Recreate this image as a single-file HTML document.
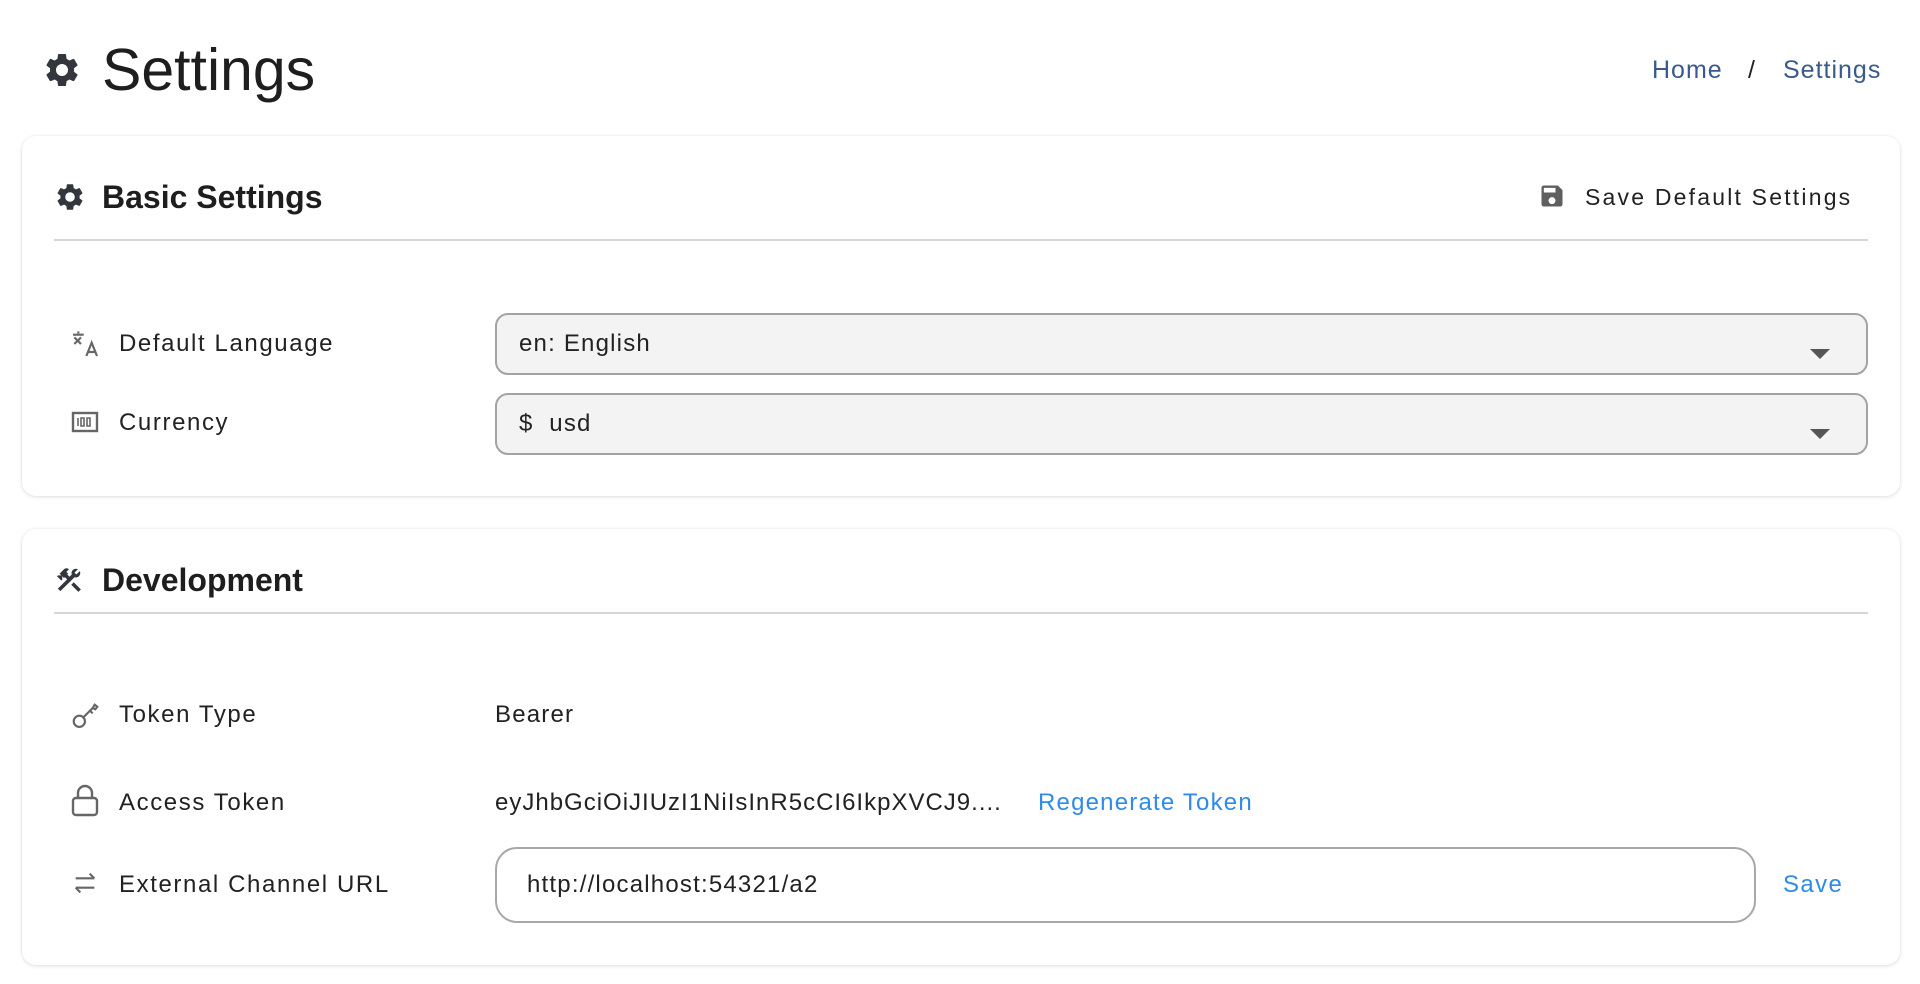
<!DOCTYPE html>
<html><head><meta charset="utf-8"><style>
*{box-sizing:border-box;margin:0;padding:0}
body{width:1920px;height:984px;background:#fff;font-family:"Liberation Sans",sans-serif;color:#222;position:relative;overflow:hidden}
.a{position:absolute}
.card{position:absolute;left:22px;width:1878px;background:#fff;border-radius:14px;box-shadow:0 1px 4px rgba(0,0,0,.12),0 0 2px rgba(0,0,0,.06)}
.h{position:absolute;font-size:32px;font-weight:bold;color:#1e1e1e;line-height:40px}
.div{position:absolute;left:32px;width:1814px;height:2px;background:#d6d6d6}
.lbl{position:absolute;font-size:24px;letter-spacing:1.6px;color:#222;line-height:30px}
.ic{position:absolute}
.sel{position:absolute;left:473px;width:1373px;height:62px;background:#f3f3f3;border:2px solid #a3a3a3;border-radius:13px}
.sel span{position:absolute;left:22px;top:14px;font-size:24px;letter-spacing:1.2px;line-height:30px}
.sel i{position:absolute;right:36px;top:34px;width:0;height:0;border-left:10px solid transparent;border-right:10px solid transparent;border-top:10px solid #555}
</style></head><body>
<svg class="a" style="left:42px;top:50px" width="40" height="40" viewBox="0 0 24 24"><path fill="#33373d" d="M19.14 12.94c.04-.3.06-.61.06-.94 0-.32-.02-.64-.07-.94l2.03-1.58a.49.49 0 0 0 .12-.61l-1.92-3.32a.49.49 0 0 0-.59-.22l-2.39.96c-.5-.38-1.03-.7-1.62-.94l-.36-2.54a.48.48 0 0 0-.48-.41h-3.84a.48.48 0 0 0-.47.41l-.36 2.54c-.59.24-1.13.57-1.62.94l-2.39-.96a.48.48 0 0 0-.59.22L2.740 8.87c-.12.21-.08.47.12.61l2.03 1.58c-.05.3-.09.63-.09.94s.02.64.07.94l-2.03 1.58a.49.49 0 0 0-.12.61l1.92 3.32c.12.22.37.29.59.22l2.39-.96c.5.38 1.03.7 1.62.94l.36 2.54c.05.24.24.41.48.41h3.84c.24 0 .44-.17.47-.41l.36-2.54c.59-.24 1.13-.56 1.62-.94l2.39.96c.22.08.47 0 .59-.22l1.92-3.32c.12-.22.07-.47-.12-.61l-2.01-1.58zM12 15.6A3.6 3.6 0 1 1 12 8.4a3.6 3.6 0 0 1 0 7.2z"/></svg>
<div class="a" style="left:102px;top:36px;font-size:59px;line-height:68px;color:#1e1e1e">Settings</div>
<div class="a" style="left:1652px;top:56px;font-size:25px;letter-spacing:1px;color:#3a5a8c">Home</div>
<div class="a" style="left:1748px;top:56px;font-size:25px;color:#222">/</div>
<div class="a" style="left:1783px;top:56px;font-size:25px;letter-spacing:1px;color:#3a5a8c">Settings</div>

<div class="card" style="top:136px;height:360px">
  <svg class="ic" style="left:32px;top:45px" width="32" height="32" viewBox="0 0 24 24"><path fill="#33373d" d="M19.14 12.94c.04-.3.06-.61.06-.94 0-.32-.02-.64-.07-.94l2.03-1.58a.49.49 0 0 0 .12-.61l-1.92-3.32a.49.49 0 0 0-.59-.22l-2.39.96c-.5-.38-1.03-.7-1.62-.94l-.36-2.54a.48.48 0 0 0-.48-.41h-3.84a.48.48 0 0 0-.47.41l-.36 2.54c-.59.24-1.13.57-1.62.94l-2.39-.96a.48.48 0 0 0-.59.22L2.74 8.87c-.12.21-.08.47.12.61l2.03 1.58c-.05.3-.09.63-.09.94s.02.64.07.94l-2.03 1.58a.49.49 0 0 0-.12.61l1.92 3.32c.12.22.37.29.59.22l2.39-.96c.5.38 1.03.7 1.62.94l.36 2.54c.05.24.24.41.48.41h3.84c.24 0 .44-.17.47-.41l.36-2.54c.59-.24 1.13-.56 1.62-.94l2.39.96c.22.08.47 0 .59-.22l1.92-3.32c.12-.22.07-.47-.12-.61l-2.01-1.58zM12 15.6A3.6 3.6 0 1 1 12 8.4a3.6 3.6 0 0 1 0 7.2z"/></svg>
  <div class="h" style="left:80px;top:41px">Basic Settings</div>
  <svg class="ic" style="left:1516px;top:46px" width="28" height="28" viewBox="0 0 24 24"><path fill="#5f5f5f" d="M17 3H5a2 2 0 0 0-2 2v14a2 2 0 0 0 2 2h14a2 2 0 0 0 2-2V7l-4-4zm-5 16a3 3 0 1 1 0-6 3 3 0 0 1 0 6zm3-10H5V5h10v4z"/></svg>
  <div class="a" style="left:1563px;top:46px;font-size:23px;letter-spacing:2.2px;color:#222;line-height:30px">Save Default Settings</div>
  <div class="div" style="top:103px"></div>
  <svg class="ic" style="left:47px;top:192px" width="32" height="32" viewBox="0 0 24 24"><path fill="none" stroke="#666" stroke-width="1.6" d="M3 5h8M7 2.5v1.5M4 7l5 5M9 7l-5 5M13 21l4-10 4 10M14.5 18h5"/></svg>
  <div class="lbl" style="left:97px;top:193px">Default Language</div>
  <div class="sel" style="top:177px"><span>en: English</span><i></i></div>
  <svg class="ic" style="left:49px;top:274px" width="28" height="24" viewBox="0 0 28 24"><rect x="2" y="3" width="24" height="18" fill="none" stroke="#666" stroke-width="2.4"/><path fill="none" stroke="#666" stroke-width="1.6" d="M7 8v8M10 8h3v8h-3zM16 8h3v8h-3z"/></svg>
  <div class="lbl" style="left:97px;top:272px">Currency</div>
  <div class="sel" style="top:257px"><span>$&nbsp; usd</span><i></i></div>
</div>

<div class="card" style="top:529px;height:436px">
  <svg class="ic" style="left:32px;top:36px" width="30" height="30" viewBox="0 0 24 24"><path fill="#33373d" d="M13.8 15.8 19.5 21.5l2-2-5.7-5.7zM17.5 10c1.9 0 3.5-1.6 3.5-3.5 0-.6-.1-1.1-.4-1.6l-2.7 2.7-1.5-1.5 2.7-2.7c-.5-.2-1-.4-1.6-.4C15.6 3 14 4.6 14 6.5c0 .4.1.8.2 1.1l-1.8 1.8-1.8-1.8.7-.7-1.4-1.4L12 3.4a2.8 2.8 0 0 0-4 0L4.5 6.9l1.4 1.4H3.1l-.7.7 3.5 3.5.7-.7V9l1.4 1.4.7-.7 1.8 1.8-7.4 7.4 2 2L16.4 9.8c.3.1.7.2 1.1.2z"/></svg>
  <div class="h" style="left:80px;top:31px">Development</div>
  <div class="div" style="top:83px"></div>
  <svg class="ic" style="left:48px;top:171px" width="32" height="32" viewBox="0 0 24 24"><circle cx="7" cy="16" r="4.2" fill="none" stroke="#666" stroke-width="1.6"/><path fill="none" stroke="#666" stroke-width="1.6" d="M10 13l7-7M15 8l2 2M17 6l1.5-2.5 2 1.5-1.5 2z"/></svg>
  <div class="lbl" style="left:97px;top:171px">Token Type</div>
  <div class="lbl" style="left:473px;top:171px;letter-spacing:1.2px">Bearer</div>
  <svg class="ic" style="left:48px;top:254px" width="30" height="36" viewBox="0 0 30 36"><rect x="3" y="15" width="24" height="17" rx="3" fill="none" stroke="#666" stroke-width="2.4"/><path fill="none" stroke="#666" stroke-width="2.4" d="M8 15V10a7 7 0 0 1 14 0v5"/></svg>
  <div class="lbl" style="left:97px;top:259px">Access Token</div>
  <div class="lbl" style="left:473px;top:259px;letter-spacing:1px">eyJhbGciOiJIUzI1NiIsInR5cCI6IkpXVCJ9....</div>
  <div class="lbl" style="left:1016px;top:259px;color:#2f8be6;letter-spacing:1.2px">Regenerate Token</div>
  <svg class="ic" style="left:49px;top:340px" width="28" height="28" viewBox="0 0 24 24"><path fill="none" stroke="#666" stroke-width="1.8" d="M4 8h16M16 4l4 4M20 16H4M8 20l-4-4"/></svg>
  <div class="lbl" style="left:97px;top:341px">External Channel URL</div>
  <div class="a" style="left:473px;top:318px;width:1261px;height:76px;border:2px solid #a8a8a8;border-radius:22px;background:#fff"><span style="position:absolute;left:30px;top:22px;font-size:24px;letter-spacing:1.2px">http://localhost:54321/a2</span></div>
  <div class="lbl" style="left:1761px;top:341px;color:#2f8be6;letter-spacing:1.4px">Save</div>
</div>
</body></html>
